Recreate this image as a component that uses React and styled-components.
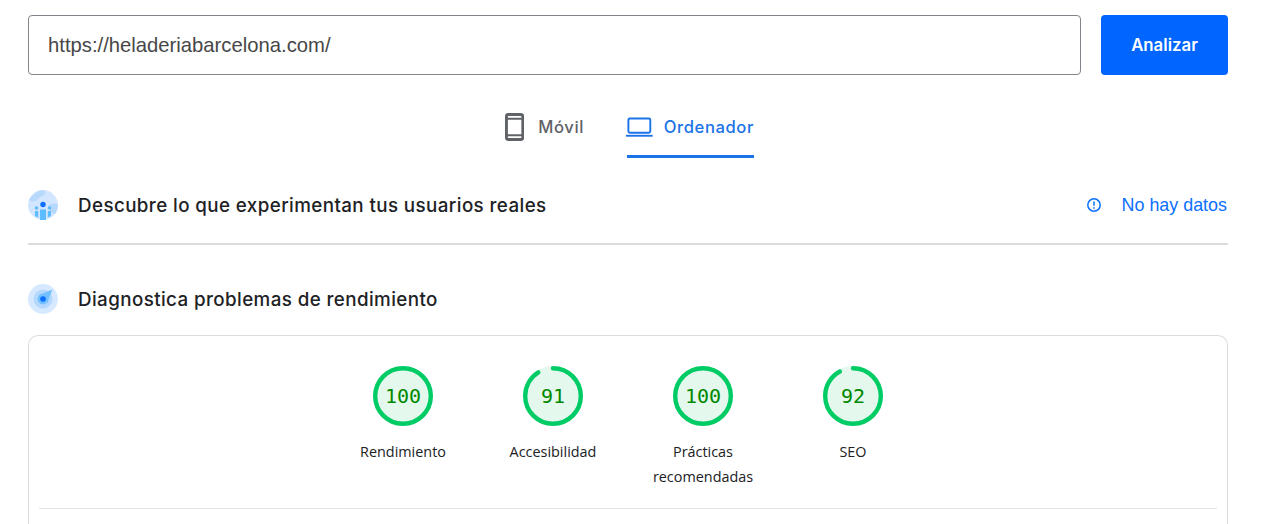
import React from 'react';
import styled, { createGlobalStyle } from 'styled-components';

const GlobalStyle = createGlobalStyle`
  html, body {
    margin: 0;
    height: 524px;
    overflow: hidden;
    background: #fff;
  }
`;

const Page = styled.div`
  width: 1200px;
  margin-left: 28px;
  padding-top: 15px;
`;

const SearchRow = styled.div`
  display: flex;
  gap: 20px;
`;

const UrlInput = styled.div`
  flex: 1;
  height: 60px;
  box-sizing: border-box;
  border: 1px solid #80868b;
  border-radius: 4px;
  padding-left: 19px;
  display: flex;
  align-items: center;
  font: 20.25px "Liberation Sans", Arial, sans-serif;
  color: #474747;
`;

const AnalyzeButton = styled.button`
  width: 127px;
  height: 60px;
  border: none;
  border-radius: 4px;
  background: #0066ff;
  color: #fff;
  font: 600 16.8px Inter, sans-serif;
`;

const Tabs = styled.div`
  display: flex;
  justify-content: center;
  margin-top: 28px;
  gap: 43px;
  padding-left: 3px;
`;

const Tab = styled.div`
  width: ${p => p.$width}px;
  height: 55px;
  box-sizing: border-box;
  display: flex;
  align-items: center;
  padding-bottom: 4px;
  gap: ${p => p.$gap}px;
  white-space: nowrap;
  color: ${p => (p.$active ? '#1a73e8' : '#5f6368')};
  border-bottom: 3px solid ${p => (p.$active ? '#1a73e8' : 'transparent')};
  font: 500 16.6px Inter, sans-serif;
  letter-spacing: 0.6px;
`;

const SectionRow = styled.div`
  display: flex;
  align-items: center;
  gap: 20px;
  height: 30px;
  margin-top: ${p => p.$top}px;
  border-bottom: ${p => (p.$rule ? '2px solid #dadce0' : 'none')};
  padding-bottom: ${p => p.$pad || 0}px;
`;

const SectionTitle = styled.h2`
  margin: 0;
  flex: 1;
  font: 500 18.8px Inter, sans-serif;
  letter-spacing: 0.4px;
  color: #202124;
`;

const NoData = styled.div`
  display: flex;
  align-items: center;
  gap: 20px;
  font: 17.9px "Liberation Sans", Arial, sans-serif;
  color: #0b6fff;
  padding-right: 1px;
`;

const Card = styled.div`
  height: 189px;
  margin-top: 21px;
  box-sizing: border-box;
  border: 1px solid #dadce0;
  border-bottom: none;
  border-radius: 10px 10px 0 0;
  padding: 30px 10px 0;
`;

const Scores = styled.div`
  display: flex;
  justify-content: center;
  height: 142px;
  border-bottom: 1px solid #e3e4e6;
`;

const Score = styled.div`
  width: 150px;
  display: flex;
  flex-direction: column;
  align-items: center;
`;

const Gauge = styled.div`
  position: relative;
  width: 60px;
  height: 60px;
`;

const GaugeValue = styled.span`
  position: absolute;
  inset: 0;
  display: flex;
  align-items: center;
  justify-content: center;
  font: 20px "DejaVu Sans Mono", monospace;
  color: #008800;
`;

const ScoreLabel = styled.div`
  margin-top: 13px;
  width: 130px;
  text-align: center;
  font: 14.4px/25px "Open Sans", sans-serif;
  color: #202124;
`;

const PhoneIcon = () => (
  <svg width="20" height="30" viewBox="0 0 20 30">
    <rect x="1.5" y="2" width="17" height="26" rx="2" fill="none" stroke="#5f6368" strokeWidth="3" />
    <path d="M1 6.5h18M1 23.5h18" stroke="#5f6368" strokeWidth="2" />
  </svg>
);

const LaptopIcon = () => (
  <svg width="28" height="22" viewBox="0 0 28 22" style={{ marginLeft: -1 }}>
    <rect x="2.5" y="2" width="23" height="15" rx="1.5" fill="none" stroke="#1a73e8" strokeWidth="2" />
    <path d="M0 20.2h28" stroke="#1a73e8" strokeWidth="2" />
  </svg>
);

const CruxIcon = () => (
  <svg width="30" height="30" viewBox="0 0 30 30">
    <circle cx="15" cy="15" r="15" fill="#d2e6ff" />
    <path d="M1 10C5 4 9 1 15 0c3 1 3 3 1 5-3 2-5 2-7 5-2 2-5 2-8 0zM20 16c3-3 6-3 10-2 0 4-1 8-3 10-3 0-6-5-7-8z" fill="#b6d8fb" />
    <circle cx="15" cy="14.5" r="2.7" fill="#0b6fff" />
    <circle cx="8.5" cy="18" r="1.8" fill="#5cbcff" />
    <circle cx="21.5" cy="18" r="1.8" fill="#5cbcff" />
    <path d="M7 21h3.2v6.6L7 26zM12 19.5h6V30h-6zM19.8 21H23v5l-3.2 1.6z" fill="#5cbcff" />
  </svg>
);

const RadarIcon = () => (
  <svg width="30" height="30" viewBox="0 0 30 30">
    <circle cx="15" cy="15" r="15" fill="#d7e9ff" />
    <circle cx="15" cy="15" r="9.5" fill="#b5d8ff" />
    <path d="M24.5 5.5L19 19 11 11z" fill="#73c0ff" />
    <circle cx="15" cy="15" r="5.4" fill="#73c0ff" />
    <circle cx="15" cy="15" r="2.8" fill="#0b6fff" />
  </svg>
);

const InfoIcon = () => (
  <svg width="16" height="16" viewBox="0 0 16 16">
    <circle cx="8" cy="8" r="6.2" fill="none" stroke="#0b6fff" strokeWidth="1.5" />
    <path d="M8 4.4v4.4M8 10.2v1.5" stroke="#0b6fff" strokeWidth="1.5" />
  </svg>
);

const ScoreGauge = ({ value }) => {
  const r = 27.8;
  const len = 2 * Math.PI * r;
  const shown = value === 100 ? len : (len * value) / 100;
  return (
    <Gauge>
      <svg width="60" height="60" viewBox="0 0 60 60">
        <circle cx="30" cy="30" r="30" fill="#e5f8ee" />
        <circle
          cx="30"
          cy="30"
          r={r}
          fill="none"
          stroke="#00cc66"
          strokeWidth="4.4"
          strokeLinecap={value === 100 ? 'butt' : 'round'}
          strokeDasharray={`${shown} ${len}`}
          transform="rotate(-90 30 30)"
        />
      </svg>
      <GaugeValue>{value}</GaugeValue>
    </Gauge>
  );
};

const scores = [
  { value: 100, label: 'Rendimiento' },
  { value: 91, label: 'Accesibilidad' },
  { value: 100, label: 'Prácticas recomendadas' },
  { value: 92, label: 'SEO' },
];

const App = () => {
  return (
    <>
      <GlobalStyle />
      <Page>
        <SearchRow>
          <UrlInput>https://heladeriabarcelona.com/</UrlInput>
          <AnalyzeButton>Analizar</AnalyzeButton>
        </SearchRow>
        <Tabs>
          <Tab $width={79} $gap={14}><PhoneIcon />Móvil</Tab>
          <Tab $width={127} $active $gap={11}><LaptopIcon />Ordenador</Tab>
        </Tabs>
        <SectionRow $top={32} $pad={23} $rule>
          <CruxIcon />
          <SectionTitle>Descubre lo que experimentan tus usuarios reales</SectionTitle>
          <NoData><InfoIcon />No hay datos</NoData>
        </SectionRow>
        <SectionRow $top={39}>
          <RadarIcon />
          <SectionTitle>Diagnostica problemas de rendimiento</SectionTitle>
        </SectionRow>
        <Card>
          <Scores>
            {scores.map((item, index) => (
              <Score key={index}>
                <ScoreGauge value={item.value} />
                <ScoreLabel>{item.label}</ScoreLabel>
              </Score>
            ))}
          </Scores>
        </Card>
      </Page>
    </>
  );
};

export default App;
